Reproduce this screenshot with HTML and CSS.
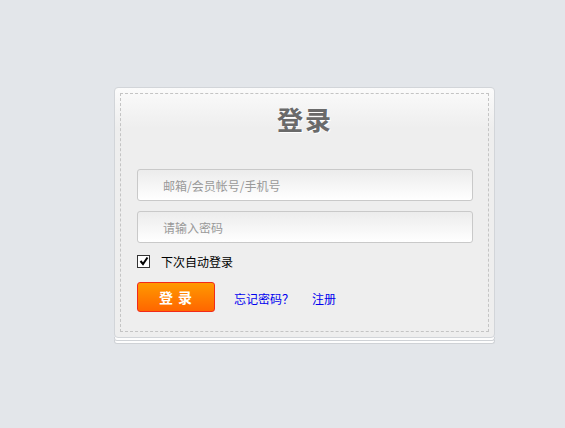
FILE: index.html
```html
<!DOCTYPE html>
<html>
<head>
<meta charset="utf-8">
<link rel="stylesheet" href="styles.css">
</head>
<body>
<div class="stack">
  <div class="card">
    <div class="inner">
      <h1 class="title">登录</h1>
      <div class="field"><span class="ph">邮箱/会员帐号/手机号</span></div>
      <div class="field"><span class="ph">请输入密码</span></div>
      <label class="remember"><span class="check"><svg width="10" height="10" viewBox="0 0 10 10"><path d="M1.5 5 L4 8 L8.5 1.5" fill="none" stroke="#000" stroke-width="2"/></svg></span>下次自动登录</label>
      <div class="actions">
        <button class="btn">登 录</button>
        <a class="link forgot" href="#">忘记密码？</a>
        <a class="link" href="#">注册</a>
      </div>
    </div>
  </div>
  <div class="sheet s1"></div>
  <div class="sheet s2"></div>
</div>
</body>
</html>
```
FILE: styles.css
```css
html, body {
  margin: 0;
  padding: 0;
  background: #e3e6ea;
  font-family: "Noto Sans CJK SC", "Liberation Sans", sans-serif;
}
.stack {
  width: 381px;
  margin: 87px 0 0 114px;
}
.card {
  box-sizing: border-box;
  width: 381px;
  height: 251px;
  padding: 5px;
  border-radius: 4px;
  border: 1px solid #d2d5d9;
  background: linear-gradient(#fbfbfb, #eeeeee 40px, #eeeeee);
  position: relative;
  z-index: 3;
}
.sheet {
  box-sizing: border-box;
  height: 4px;
  margin-top: -1px;
  border: 1px solid #cfd2d6;
  border-top: none;
  border-radius: 0 0 3px 3px;
  background: #fdfdfd;
  position: relative;
}
.s1 { z-index: 2; }
.s2 { z-index: 1; }
.inner {
  box-sizing: border-box;
  height: 100%;
  border: 1px dashed #c4c4c4;
  padding: 8px 15px 0 16px;
}
.title {
  margin: 0 0 33px;
  text-align: center;
  font-size: 26px;
  line-height: 34px;
  font-weight: bold;
  color: #6a6a6a;
  letter-spacing: 2px;
  text-shadow: 1px 1px 0 #fff;
}
.field {
  box-sizing: border-box;
  height: 32px;
  border: 1px solid #c9c9c9;
  border-radius: 3px;
  background: linear-gradient(#ececec, #ffffff);
  display: flex;
  align-items: center;
  padding-left: 25px;
  margin-bottom: 10px;
}
.ph {
  font-size: 12px;
  color: #999;
}
.remember {
  display: flex;
  align-items: center;
  gap: 11px;
  font-size: 12px;
  color: #000;
  margin-top: 11px;
  height: 14px;
}
.check {
  box-sizing: border-box;
  width: 13px;
  height: 13px;
  border: 1px solid #333;
  background: #fff;
  display: flex;
  align-items: center;
  justify-content: center;
}
.actions {
  display: flex;
  align-items: center;
  margin-top: 14px;
}
.btn {
  box-sizing: border-box;
  width: 78px;
  height: 30px;
  border: 1px solid #f22a1a;
  border-radius: 3px;
  background: linear-gradient(#ff9900, #ff6600);
  color: #fff;
  font-family: inherit;
  font-size: 14px;
  font-weight: bold;
  letter-spacing: 1px;
  padding: 0;
}
.link {
  font-size: 12px;
  color: #0000ee;
  text-decoration: none;
  margin-top: 2px;
}
.forgot {
  margin-left: 19px;
  margin-right: 18px;
}
```
